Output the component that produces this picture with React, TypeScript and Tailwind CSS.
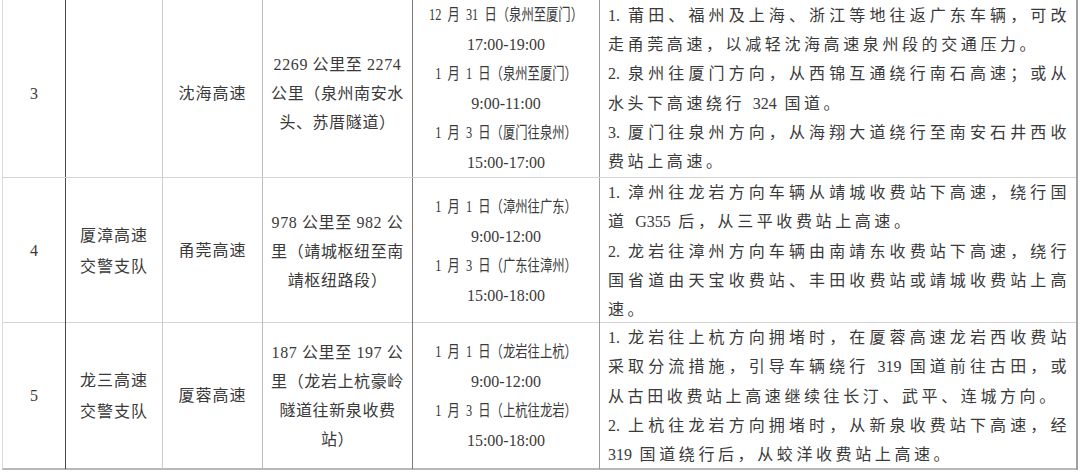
import React from "react"

type Line = { text: string; justify?: boolean }

interface RowData {
  no: string
  unit: string[]
  road: string
  section: string[]
  times: string[]
  notes: Line[]
  height: string
  bottom: string
  lift?: boolean
}

const rows: RowData[] = [
  {
    no: "3",
    unit: [],
    road: "沈海高速",
    section: ["2269 公里至 2274", "公里（泉州南安水", "头、苏厝隧道）"],
    times: [
      "12 月 31 日（泉州至厦门）",
      "17:00-19:00",
      "1 月 1 日（泉州至厦门）",
      "9:00-11:00",
      "1 月 3 日（厦门往泉州）",
      "15:00-17:00",
    ],
    notes: [
      { text: "1. 莆田、福州及上海、浙江等地往返广东车辆，可改", justify: true },
      { text: "走甬莞高速，以减轻沈海高速泉州段的交通压力。" },
      { text: "2. 泉州往厦门方向，从西锦互通绕行南石高速；或从", justify: true },
      { text: "水头下高速绕行 324 国道。" },
      { text: "3. 厦门往泉州方向，从海翔大道绕行至南安石井西收", justify: true },
      { text: "费站上高速。" },
    ],
    height: "h-[178px]",
    bottom: "border-b border-[#d4d4d4]",
    lift: true,
  },
  {
    no: "4",
    unit: ["厦漳高速", "交警支队"],
    road: "甬莞高速",
    section: ["978 公里至 982 公", "里（靖城枢纽至南", "靖枢纽路段）"],
    times: ["1 月 1 日（漳州往广东）", "9:00-12:00", "1 月 3 日（广东往漳州）", "15:00-18:00"],
    notes: [
      { text: "1. 漳州往龙岩方向车辆从靖城收费站下高速，绕行国", justify: true },
      { text: "道 G355 后，从三平收费站上高速。" },
      { text: "2. 龙岩往漳州方向车辆由南靖东收费站下高速，绕行", justify: true },
      { text: "国省道由天宝收费站、丰田收费站或靖城收费站上高", justify: true },
      { text: "速。" },
    ],
    height: "h-[145px]",
    bottom: "border-b border-[#d4d4d4]",
  },
  {
    no: "5",
    unit: ["龙三高速", "交警支队"],
    road: "厦蓉高速",
    section: ["187 公里至 197 公", "里（龙岩上杭豪岭", "隧道往新泉收费", "站）"],
    times: ["1 月 1 日（龙岩往上杭）", "9:00-12:00", "1 月 3 日（上杭往龙岩）", "15:00-18:00"],
    notes: [
      { text: "1. 龙岩往上杭方向拥堵时，在厦蓉高速龙岩西收费站", justify: true },
      { text: "采取分流措施，引导车辆绕行 319 国道前往古田，或", justify: true },
      { text: "从古田收费站上高速继续往长汀、武平、连城方向。" },
      { text: "2. 上杭往龙岩方向拥堵时，从新泉收费站下高速，经", justify: true },
      { text: "319 国道绕行后，从蛟洋收费站上高速。" },
    ],
    height: "h-[147px]",
    bottom: "border-b-2 border-[#b8b8b8]",
  },
]

const cell = "flex flex-col items-center justify-center text-center"

// latin runs (digits, "1.", "G355") keep normal spacing inside the spaced-out notes
const Spaced = ({ text }: { text: string }) => (
  <>
    {text.split(/([0-9A-Za-z.:\-]+)/).map((part, i) =>
      i % 2 === 1 ? (
        <span key={i} className="tracking-normal">
          {part}
        </span>
      ) : (
        <React.Fragment key={i}>{part}</React.Fragment>
      )
    )}
  </>
)

const Row = ({ r }: { r: RowData }) => {
  const lift = r.lift ? "pt-[10px]" : ""
  return (
    <div
      className={`grid grid-cols-[63px_97px_100px_150px_187px_478px] ${r.height} ${r.bottom}`}
    >
      <div className={`${cell} ${lift} border-l border-[#dcdcdc]`}>{r.no}</div>
      <div className={`${cell} ${lift} border-l border-[#4a4a4a] gap-[7px] tracking-[1px]`}>
        {r.unit.map((u) => (
          <div key={u}>{u}</div>
        ))}
      </div>
      <div className={`${cell} ${lift} border-l border-[#cccccc] tracking-[1px]`}>{r.road}</div>
      <div className={`${cell} ${lift} border-l border-[#bdbdbd] leading-[29px] tracking-[0.6px]`}>
        {r.section.map((s) => (
          <div key={s} className="whitespace-pre">
            {s}
          </div>
        ))}
      </div>
      <div className={`${cell} border-l border-[#7a7a7a] leading-[29.5px]`}>
        {r.times.map((t) =>
          t.includes("月") ? (
            <div key={t} className="whitespace-nowrap">
              <span className="inline-block scale-x-[0.77] whitespace-pre">
                {t.replace(/ /g, "\u2002")}
              </span>
            </div>
          ) : (
            <div key={t}>{t}</div>
          )
        )}
      </div>
      <div className="flex flex-col justify-center border-l border-[#9a9a9a] pl-[8px] pr-[7px] leading-[29.3px] tracking-[3.6px]">
        {r.notes.map((n) => (
          <div
            key={n.text}
            className={
              n.justify
                ? "whitespace-nowrap text-justify [text-align-last:justify]"
                : "whitespace-nowrap text-left"
            }
          >
            <Spaced text={n.text} />
          </div>
        ))}
      </div>
    </div>
  )
}

export default function App() {
  return (
    <div className="h-[472px] w-[1080px] overflow-hidden bg-white">
      <div
        className="ml-[2px] w-[1076px] border-r-2 border-double border-[#a0a0a0] text-[16px] text-[#3a3a3a] antialiased"
        style={{ fontFamily: '"Liberation Serif", "Noto Sans CJK SC", serif' }}
      >
        {rows.map((r) => (
          <Row key={r.no} r={r} />
        ))}
      </div>
    </div>
  )
}
